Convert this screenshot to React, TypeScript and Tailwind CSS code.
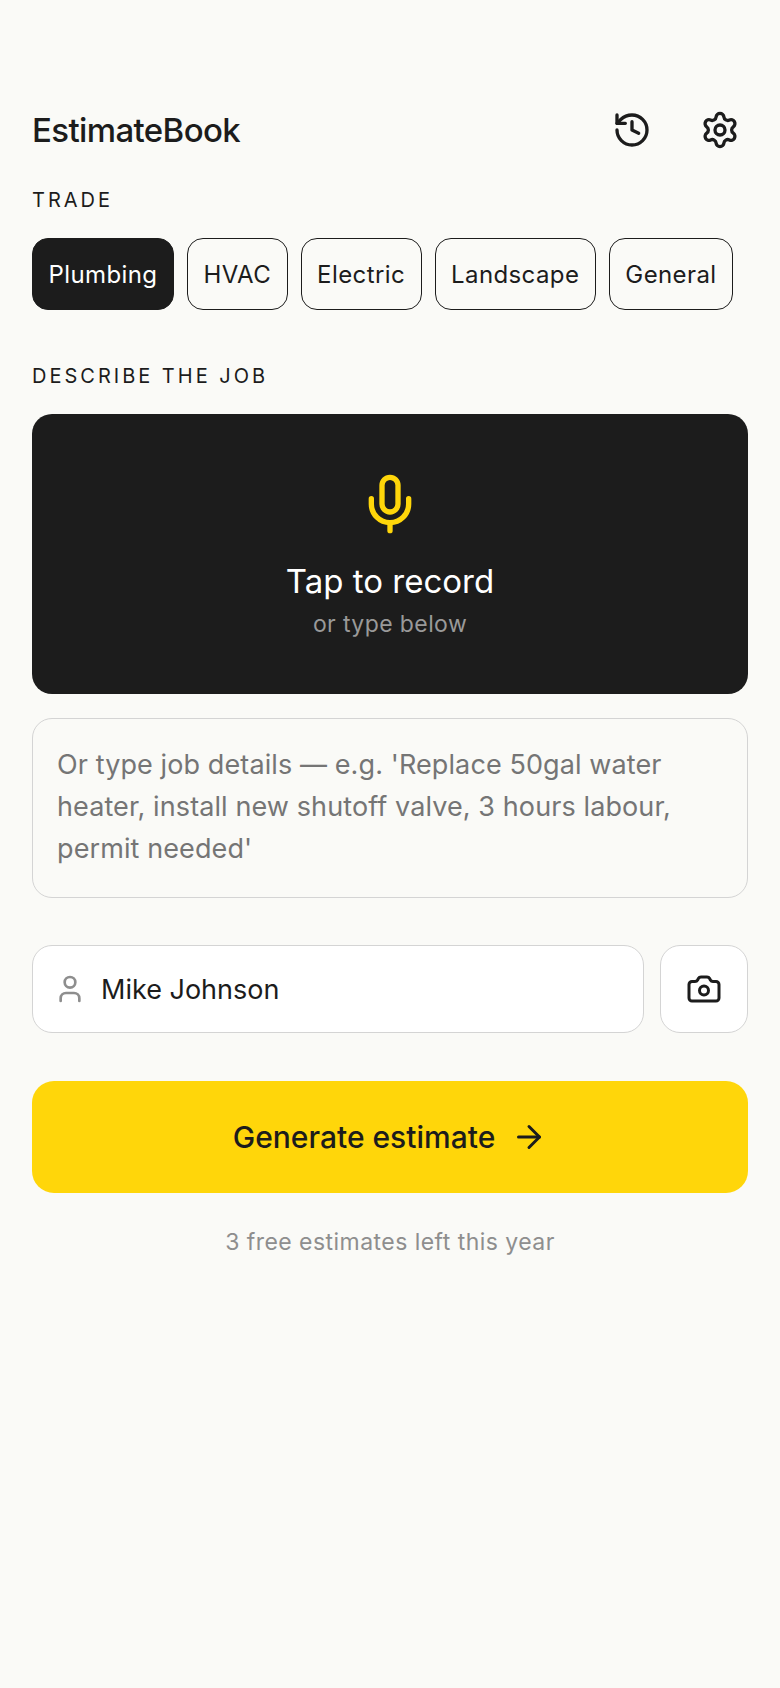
import { ArrowRight, Camera, History, Mic, Settings, User } from "lucide-react";

const trades = ["Plumbing", "HVAC", "Electric", "Landscape", "General"];

export default function App() {
  return (
    <div className="min-h-[1688px] bg-[#fafaf7] px-8 pt-[106px] font-['Inter',sans-serif] text-[#1c1c1c]">
      <header className="flex h-[48px] items-center justify-between">
        <h1 className="mt-[2px] text-[33px] font-medium tracking-[-0.62px]">EstimateBook</h1>
        <div className="flex items-center gap-[48px] pr-[8px]">
          <History size={40} strokeWidth={2} />
          <Settings size={40} strokeWidth={2} />
        </div>
      </header>

      <p className="mt-[32px] text-[20px] leading-[28px] tracking-[3px]">TRADE</p>
      <div className="mt-[24px] flex gap-[13px]">
        {trades.map((trade, i) => (
          <button
            key={trade}
            className={`h-[72px] rounded-[16px] border px-[15.5px] pt-[1px] text-[24px] tracking-[0.4px] ${
              i === 0 ? "border-[#1c1c1c] bg-[#1c1c1c] text-white" : "border-[#1c1c1c]"
            }`}
          >
            {trade}
          </button>
        ))}
      </div>

      <p className="mt-[52px] text-[20px] leading-[28px] tracking-[3px]">DESCRIBE THE JOB</p>
      <div className="mt-[24px] flex h-[280px] flex-col items-center rounded-[20px] bg-[#1c1c1c] pt-[58px]">
        <Mic size={64} strokeWidth={2} className="text-[#ffd60a]" />
        <p className="mt-[23px] text-[33px] leading-[44px] text-white">Tap to record</p>
        <p className="mt-[5px] text-[23px] leading-[32px] tracking-[0.4px] text-[#999999]">or type below</p>
      </div>

      <div className="mt-[24px] h-[180px] rounded-[20px] border border-[#d4d4d4] px-[24px] pt-[25px] text-[27px] leading-[42px] tracking-[0.1px] text-[#757575]">
        Or type job details — e.g. 'Replace 50gal water heater, install new shutoff valve, 3 hours labour, permit needed'
      </div>

      <div className="mt-[47px] flex gap-[16px]">
        <div className="flex h-[88px] flex-1 items-center gap-[15px] rounded-[20px] border border-[#d4d4d4] bg-white pl-[21px]">
          <User size={32} strokeWidth={2} className="text-[#8e8e8e]" />
          <span className="mt-[3px] text-[27px]">Mike Johnson</span>
        </div>
        <div className="flex h-[88px] w-[88px] items-center justify-center rounded-[20px] border border-[#d4d4d4] bg-white">
          <Camera size={36} strokeWidth={2} />
        </div>
      </div>

      <button className="mt-[48px] flex h-[112px] w-full items-center justify-center gap-[16px] rounded-[22px] bg-[#ffd60a] text-[30px] font-medium">
        Generate estimate
        <ArrowRight size={36} strokeWidth={2} />
      </button>

      <p className="mt-[32px] text-center text-[23px] leading-[34px] tracking-[0.46px] text-[#8e8e8e]">
        3 free estimates left this year
      </p>
    </div>
  );
}
